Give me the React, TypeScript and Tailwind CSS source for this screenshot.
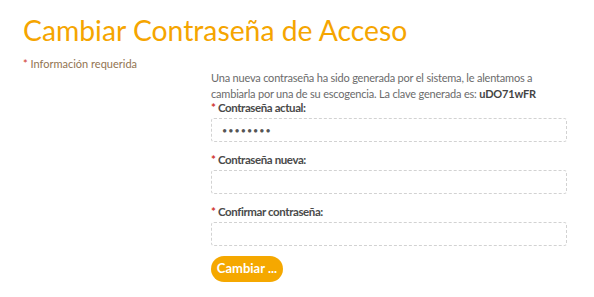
import { useState } from 'react';

const Label = ({ children }: { children: React.ReactNode }) => (
  <label className="block text-[11.5px] leading-[12px] font-bold text-[#4a4a4a] tracking-[-0.4px]">
    <span className="text-[#d0342c]">*</span> {children}
  </label>
);

const Field = ({ value, onChange }: { value: string; onChange: (v: string) => void }) => (
  <input
    type="password"
    value={value}
    onChange={(e) => onChange(e.target.value)}
    className="block w-full h-[24px] mt-[4px] px-[10px] border border-dashed border-[#d2d2d2] rounded-[3px] bg-white text-[9px] tracking-[1px] text-[#555] outline-none"
  />
);

export default function App() {
  const [actual, setActual] = useState('uDO71wFR');
  const [nueva, setNueva] = useState('');
  const [confirmar, setConfirmar] = useState('');

  return (
    <div className="w-[594px] h-[297px] bg-white font-['Lato',sans-serif] px-[23px] pt-[12px]">
      {/* Titulo */}
      <h1 className="text-[28.3px] leading-[36px] text-[#f5a500] font-normal">Cambiar Contraseña de Acceso</h1>

      <div className="flex mt-[9px]">
        <div className="w-[188px] shrink-0 text-[11px] leading-[14px] text-[#927451]">
          <span className="text-[#d0342c]">*</span> Información requerida
        </div>

        <div className="w-[356px] pt-[13px]">
          <p className="text-[11px] leading-[16px] tracking-[-0.2px] text-[#6b6b6b] whitespace-nowrap">
            Una nueva contraseña ha sido generada por el sistema, le alentamos a
            <br />
            cambiarla por una de su escogencia. La clave generada es: <b className="text-[#444]">uDO71wFR</b>
          </p>

          <div>
            <Label>Contraseña actual:</Label>
            <Field value={actual} onChange={setActual} />
          </div>
          <div className="mt-[12px]">
            <Label>Contraseña nueva:</Label>
            <Field value={nueva} onChange={setNueva} />
          </div>
          <div className="mt-[12px]">
            <Label>Confirmar contraseña:</Label>
            <Field value={confirmar} onChange={setConfirmar} />
          </div>

          <button className="block mt-[10px] h-[26px] w-[72px] rounded-full bg-[#f5a800] text-white text-[13px] font-bold">
            Cambiar ...
          </button>
        </div>
      </div>
    </div>
  );
}
